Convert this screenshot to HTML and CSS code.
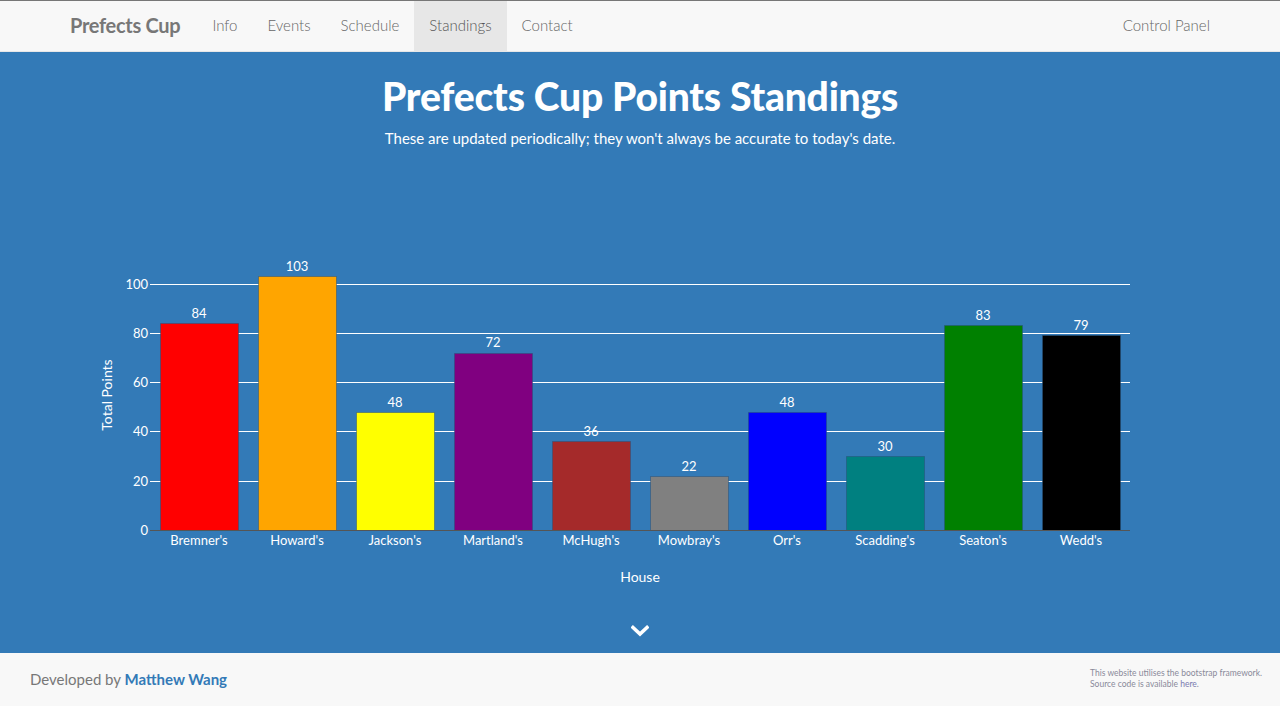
FILE: index.html
```html
<!DOCTYPE html>
<html>
<head>
<meta charset="utf-8">
<link rel="stylesheet" href="styles.css">
</head>
<body>
<nav class="navbar">
  <div class="nav-inner">
    <a class="brand">Prefects Cup</a>
    <ul class="nav-links">
      <li><a>Info</a></li>
      <li><a>Events</a></li>
      <li><a>Schedule</a></li>
      <li class="active"><a>Standings</a></li>
      <li><a>Contact</a></li>
    </ul>
    <ul class="nav-links nav-right">
      <li><a>Control Panel</a></li>
    </ul>
  </div>
</nav>
<section class="hero">
  <h1 class="title">Prefects Cup Points Standings</h1>
  <p class="subtitle">These are updated periodically; they won't always be accurate to today's date.</p>
  <svg class="chart" width="1280" height="360" viewBox="0 240 1280 360" xmlns="http://www.w3.org/2000/svg">
    <g class="grid" stroke="#fff" stroke-width="1">
      <line x1="150" x2="1130" y1="284.5" y2="284.5"/>
      <line x1="150" x2="1130" y1="333.5" y2="333.5"/>
      <line x1="150" x2="1130" y1="382.5" y2="382.5"/>
      <line x1="150" x2="1130" y1="431.5" y2="431.5"/>
      <line x1="150" x2="1130" y1="481.5" y2="481.5"/>
    </g>
    <g class="ylabels" fill="#fff" font-size="13" text-anchor="end">
      <text x="148" y="289">100</text>
      <text x="148" y="338">80</text>
      <text x="148" y="387">60</text>
      <text x="148" y="436">40</text>
      <text x="148" y="486">20</text>
      <text x="148" y="535">0</text>
    </g>
    <text class="axis-title" fill="#fff" font-size="14" text-anchor="middle" transform="translate(112 395) rotate(-90)">Total Points</text>
    <g class="bars" stroke="rgba(40,80,120,0.5)" stroke-width="1">
      <rect x="160.5" y="323.5" width="78" height="207" fill="#ff0000"/>
      <rect x="258.5" y="276.5" width="78" height="254" fill="#ffa500"/>
      <rect x="356.5" y="412.5" width="78" height="118" fill="#ffff00"/>
      <rect x="454.5" y="353.5" width="78" height="177" fill="#800080"/>
      <rect x="552.5" y="441.5" width="78" height="89" fill="#a52a2a"/>
      <rect x="650.5" y="476.5" width="78" height="54" fill="#808080"/>
      <rect x="748.5" y="412.5" width="78" height="118" fill="#0000ff"/>
      <rect x="846.5" y="456.5" width="78" height="74" fill="#008080"/>
      <rect x="944.5" y="325.5" width="78" height="205" fill="#008000"/>
      <rect x="1042.5" y="335.5" width="78" height="195" fill="#000000"/>
    </g>
    <g class="values" fill="#fff" font-size="13" text-anchor="middle">
      <text x="199" y="318">84</text>
      <text x="297" y="271">103</text>
      <text x="395" y="407">48</text>
      <text x="493" y="347">72</text>
      <text x="591" y="436">36</text>
      <text x="689" y="471">22</text>
      <text x="787" y="407">48</text>
      <text x="885" y="451">30</text>
      <text x="983" y="320">83</text>
      <text x="1081" y="330">79</text>
    </g>
    <line x1="150" x2="1130" y1="530.5" y2="530.5" stroke="#555" stroke-width="1"/>
    <g class="xlabels" fill="#fff" font-size="13" text-anchor="middle">
      <text x="199" y="545">Bremner's</text>
      <text x="297" y="545">Howard's</text>
      <text x="395" y="545">Jackson's</text>
      <text x="493" y="545">Martland's</text>
      <text x="591" y="545">McHugh's</text>
      <text x="689" y="545">Mowbray's</text>
      <text x="787" y="545">Orr's</text>
      <text x="885" y="545">Scadding's</text>
      <text x="983" y="545">Seaton's</text>
      <text x="1081" y="545">Wedd's</text>
    </g>
    <text fill="#fff" font-size="14" text-anchor="middle" x="640" y="582">House</text>
  </svg>
  <div class="chevron">
    <svg width="18" height="12" viewBox="0 0 18 12" xmlns="http://www.w3.org/2000/svg"><path d="M2 2.5 L9 9 L16 2.5" fill="none" stroke="#fff" stroke-width="3.6" stroke-linecap="square"/></svg>
  </div>
</section>
<footer class="footer">
  <p class="dev">Developed by <a class="author">Matthew Wang</a></p>
  <p class="credits">This website utilises the bootstrap framework.<br>Source code is available <a class="here">here</a>.</p>
</footer>
</body>
</html>
```
FILE: styles.css
```css
* { box-sizing: border-box; }
html, body { margin: 0; padding: 0; }
body {
  font-family: Lato, "Noto Sans", "Liberation Sans", sans-serif;
  background: #f8f8f8;
  width: 1280px;
  height: 706px;
  overflow: hidden;
}
.navbar {
  height: 52px;
  background: #f8f8f8;
  border-top: 1px solid #777;
  border-bottom: 1px solid #e7e7e7;
}
.nav-inner {
  width: 1170px;
  margin: 0 auto;
  padding: 0 15px;
  display: flex;
  align-items: stretch;
  height: 50px;
}
.brand {
  font-weight: 700;
  font-size: 20px;
  color: #777;
  display: flex;
  align-items: center;
  padding-right: 17px;
  padding-bottom: 3px;
  letter-spacing: -0.3px;
}
.nav-links {
  list-style: none;
  margin: 0;
  padding: 0;
  display: flex;
}
.nav-links li a {
  display: flex;
  align-items: center;
  height: 100%;
  padding: 0 15px 3px;
  font-size: 15px;
  font-weight: 300;
  color: #666;
}
.nav-links li.active a { background: #e7e7e7; color: #555; }
.nav-right { margin-left: auto; }
.nav-right li a { padding-right: 0; }
.hero {
  background: #337ab7;
  height: 601px;
  display: flex;
  flex-direction: column;
  align-items: center;
  color: #fff;
  padding-top: 22px;
}
.title {
  margin: 0;
  font-size: 39px;
  font-weight: 900;
  line-height: 44px;
  letter-spacing: -0.2px;
}
.subtitle {
  margin: 10px 0 0;
  font-size: 15px;
  line-height: 20px;
}
.chart {
  display: block;
  margin-top: 92px;
  font-family: Lato, "Noto Sans", "Liberation Sans", sans-serif;
}
.chevron {
  margin-top: 25px;
  height: 12px;
  display: flex;
}
.footer {
  height: 53px;
  display: flex;
  justify-content: space-between;
  align-items: center;
  padding: 0 18px 2px 30px;
}
.dev {
  margin: 0;
  font-size: 15px;
  color: #777;
}
.author {
  font-weight: 700;
  color: #337ab7;
}
.credits {
  margin: 0;
  font-size: 8.5px;
  line-height: 11px;
  color: #8a8a9a;
  width: 172px;
}
.here { color: #7a7ab0; }
```
